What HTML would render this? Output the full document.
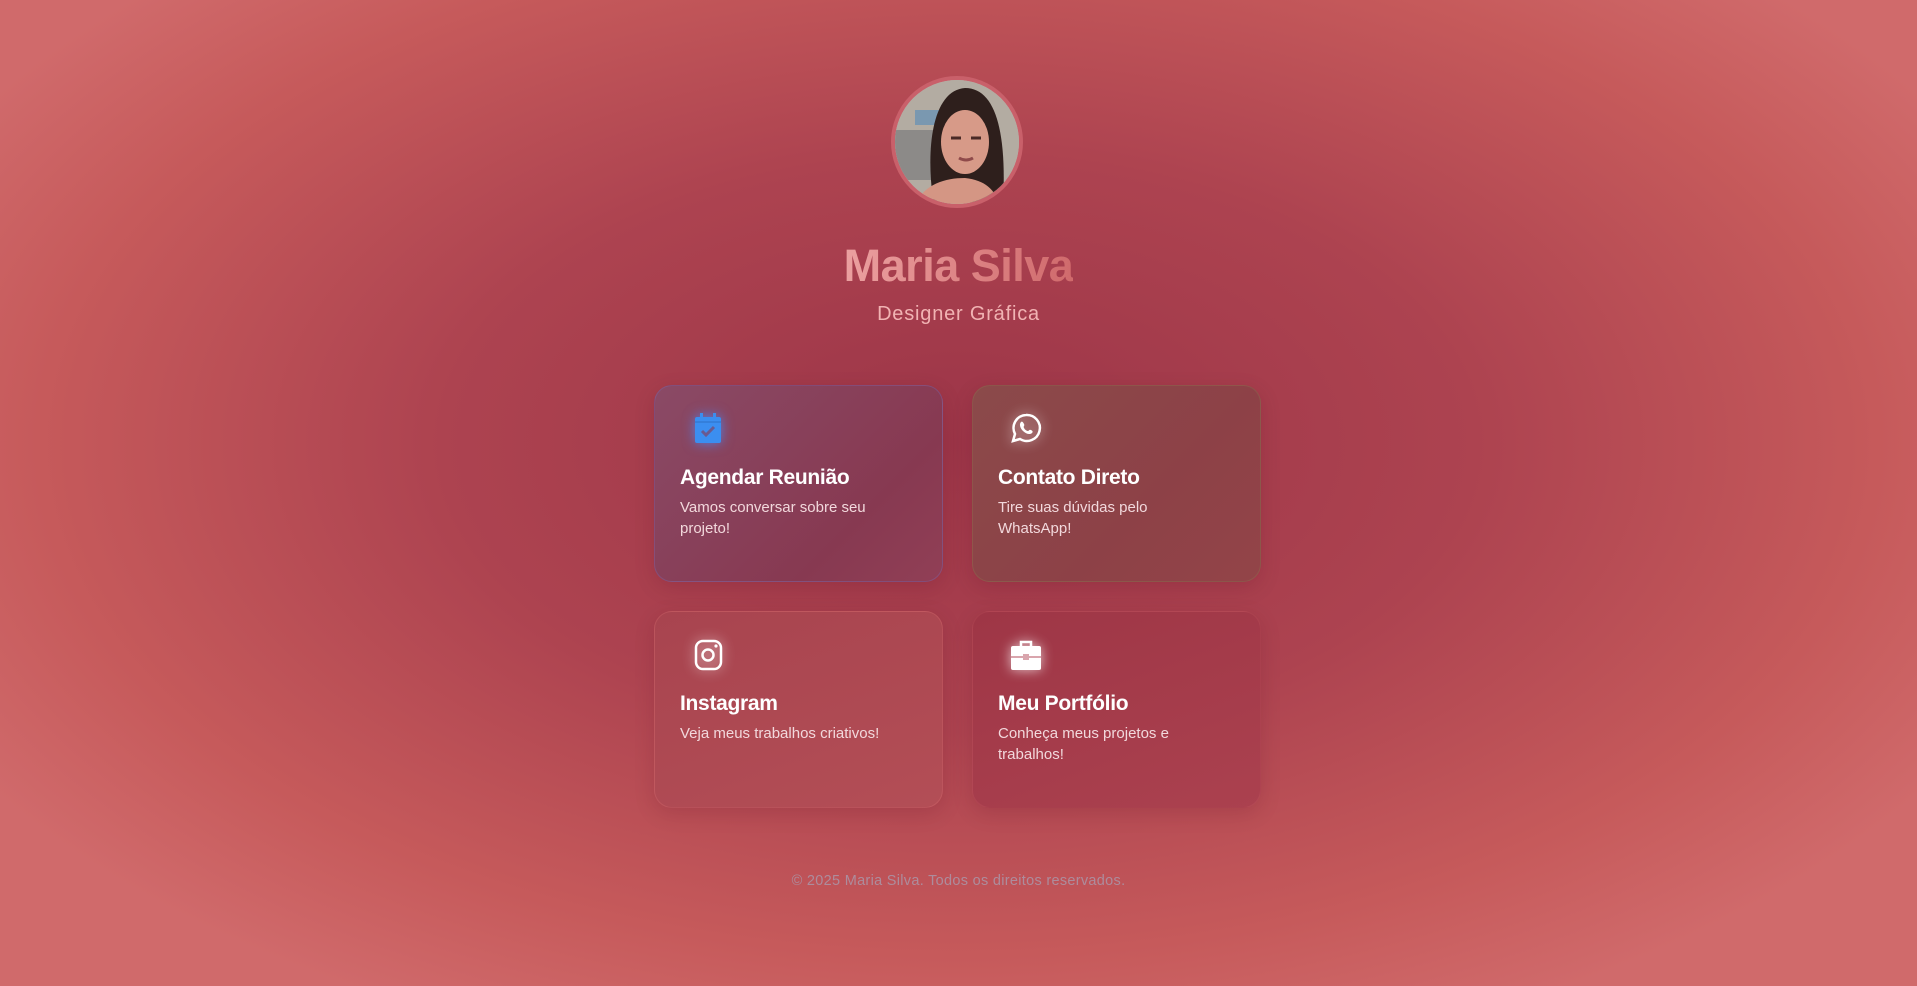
<!DOCTYPE html>
<html><head><meta charset="utf-8"><style>
html,body{margin:0;padding:0;width:1917px;height:986px;overflow:hidden}
body{font-family:"Liberation Sans",sans-serif;background:radial-gradient(ellipse 60% 65% at 50% 45%,#9c3548 0%,#ad4350 45%,#c65a5b 80%,#d06a6b 100%);position:relative}
.av{position:absolute;left:891px;top:76px;width:124px;height:124px;border-radius:50%;border:4px solid #c9606a;overflow:hidden;background:#b9b2a8}
.name{position:absolute;top:240px;left:0;width:1917px;text-align:center;font-size:45px;font-weight:bold;letter-spacing:-0.5px}
.name span{background:linear-gradient(90deg,#eba0a0,#d06a6c);-webkit-background-clip:text;background-clip:text;color:transparent}
.sub{position:absolute;top:303px;left:0;width:1917px;text-align:center;font-size:20px;color:#f1b3b3;letter-spacing:0.8px}
.card{position:absolute;width:289px;height:197px;border-radius:18px;border:1px solid rgba(255,255,255,0.12);box-shadow:0 6px 20px rgba(80,10,30,0.15);box-sizing:border-box}
.card h3{position:absolute;left:25px;top:80px;margin:0;font-size:21px;color:#fff;font-weight:bold;letter-spacing:-0.3px}
.card p{position:absolute;left:25px;top:111px;margin:0;width:205px;font-size:15px;line-height:21px;color:#f2d8dc}
.ic{position:absolute;left:36px;top:25px;width:34px;height:34px}
.foot{position:absolute;top:873px;left:0;width:1917px;text-align:center;font-size:14.5px;color:#ad8c9c;letter-spacing:0.3px}
</style></head><body>
<div class="av"><svg width="124" height="124" viewBox="0 0 124 124">
<rect width="124" height="124" fill="#b3aca2"/>
<rect x="0" y="50" width="40" height="50" fill="#8c8a88"/>
<rect x="20" y="30" width="25" height="15" fill="#7a98b0"/>
<path d="M38 120 C30 60 40 10 70 8 C100 8 112 50 108 124 Z" fill="#2e1f1c"/>
<ellipse cx="70" cy="62" rx="24" ry="32" fill="#d79a88"/>
<path d="M20 124 C30 104 50 98 70 98 C90 100 100 110 104 124Z" fill="#d49684"/>
<path d="M56 58h10M76 58h10" stroke="#4a2a26" stroke-width="3"/>
<path d="M64 78 q7 4 14 0" stroke="#8f4a4a" stroke-width="3" fill="none"/>
</svg></div>
<div class="name"><span>Maria Silva</span></div>
<div class="sub">Designer Gráfica</div>

<div class="card" style="left:654px;top:385px;background:linear-gradient(135deg,#8a4a66,#873951 70%,#913f56);border-color:rgba(120,110,190,0.35)">
<svg class="ic" viewBox="0 0 34 34" style="filter:drop-shadow(0 0 6px rgba(70,140,255,0.8))"><rect x="4" y="6" width="26" height="26" rx="2" fill="#3b8ef0"/><rect x="9" y="2" width="3" height="7" fill="#3b8ef0"/><rect x="22" y="2" width="3" height="7" fill="#3b8ef0"/><rect x="4" y="10" width="26" height="2" fill="#2e6fc6" opacity=".5"/><path d="M11 20l4 4 8-8" stroke="#6a5a90" stroke-width="3" fill="none"/></svg>
<h3>Agendar Reunião</h3><p>Vamos conversar sobre seu projeto!</p></div>

<div class="card" style="left:972px;top:385px;background:linear-gradient(135deg,#8b4a4a,#8d4147 60%,#934448);border-color:rgba(140,120,80,0.35)">
<svg class="ic" viewBox="0 0 34 34" style="filter:drop-shadow(0 0 6px rgba(255,255,255,0.7))"><path d="M17 4a13 13 0 0 0-11 19l-2 7 7-2A13 13 0 1 0 17 4z" stroke="#fff" stroke-width="2.5" fill="none"/><path d="M12 11c1-1 2 0 3 2s-1 2 0 4 3 3 4 3 1-2 3-1 2 2 1 3c-2 2-6 1-9-2s-4-7-2-9z" fill="#fff"/></svg>
<h3>Contato Direto</h3><p>Tire suas dúvidas pelo WhatsApp!</p></div>

<div class="card" style="left:654px;top:611px;background:linear-gradient(160deg,#a8444f,#b34e56);border-color:rgba(255,140,140,0.18)">
<svg class="ic" viewBox="0 0 34 34" style="filter:drop-shadow(0 0 6px rgba(255,255,255,0.7))"><rect x="5" y="4" width="25" height="28" rx="7" stroke="#fff" stroke-width="2.5" fill="none"/><circle cx="17" cy="18" r="5.5" stroke="#fff" stroke-width="2.5" fill="none"/><circle cx="25" cy="9" r="1.6" fill="#fff"/></svg>
<h3>Instagram</h3><p>Veja meus trabalhos criativos!</p></div>

<div class="card" style="left:972px;top:611px;background:linear-gradient(160deg,#9e3646,#ab414f);border-color:rgba(255,140,140,0.1)">
<svg class="ic" viewBox="0 0 34 34" style="filter:drop-shadow(0 0 6px rgba(255,255,255,0.7))"><path d="M12 9V5h10v4" stroke="#fff" stroke-width="2.5" fill="none"/><rect x="2" y="9" width="30" height="24" rx="2" fill="#fff"/><rect x="2" y="19" width="30" height="2" fill="#d9a5ad"/><rect x="14" y="17" width="6" height="6" fill="#d9a5ad"/></svg>
<h3>Meu Portfólio</h3><p>Conheça meus projetos e trabalhos!</p></div>

<div class="foot">© 2025 Maria Silva. Todos os direitos reservados.</div>
</body></html>
